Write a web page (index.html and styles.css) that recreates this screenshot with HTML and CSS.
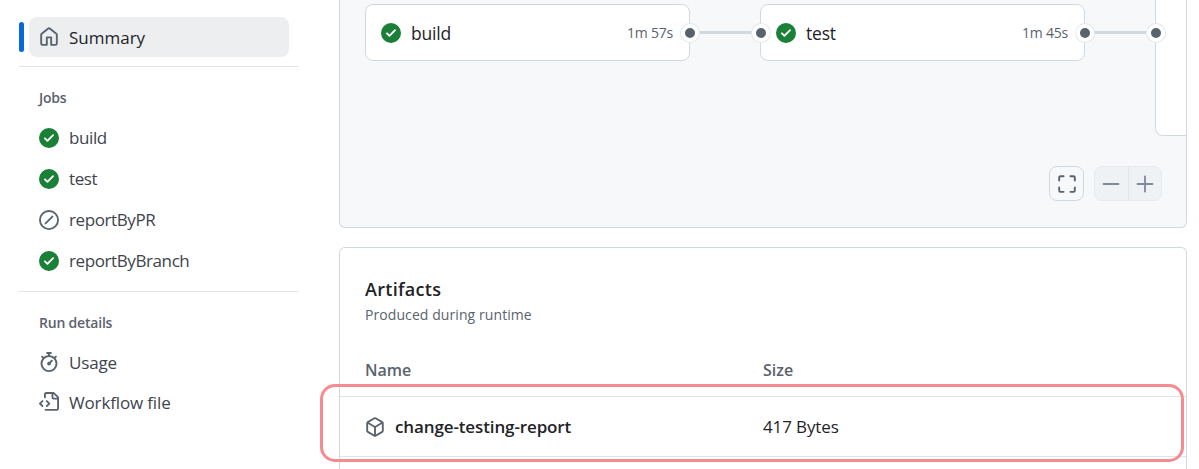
FILE: index.html
```html
<!DOCTYPE html>
<html lang="en">
<head>
<meta charset="utf-8">
<title>Summary</title>
<link rel="stylesheet" href="styles.css">
</head>
<body>
<svg class="sprite" width="0" height="0" aria-hidden="true">
  <symbol id="i-home" viewBox="0 0 16 16"><path d="M6.906.664a1.749 1.749 0 0 1 2.187 0l5.25 4.2c.415.332.657.835.657 1.367v7.019A1.75 1.75 0 0 1 13.25 15h-3.5a.75.75 0 0 1-.75-.75V9H7v5.25a.75.75 0 0 1-.75.75h-3.5A1.75 1.75 0 0 1 1 13.25V6.23c0-.531.242-1.034.657-1.366l5.25-4.2Zm1.25 1.171a.25.25 0 0 0-.312 0l-5.25 4.2a.25.25 0 0 0-.094.196v7.019c0 .138.112.25.25.25H5.5V8.25a.75.75 0 0 1 .75-.75h3.5a.75.75 0 0 1 .75.75v5.25h2.75a.25.25 0 0 0 .25-.25V6.23a.25.25 0 0 0-.094-.195Z"/></symbol>
  <symbol id="i-check" viewBox="0 0 16 16"><path d="M8 16A8 8 0 1 1 8 0a8 8 0 0 1 0 16Zm3.78-9.72a.751.751 0 0 0-.018-1.042.751.751 0 0 0-1.042-.018L6.75 9.19 5.28 7.72a.751.751 0 0 0-1.042.018.751.751 0 0 0-.018 1.042l2 2a.75.75 0 0 0 1.06 0Z"/></symbol>
  <symbol id="i-skip" viewBox="0 0 16 16"><path d="M8 0a8 8 0 1 1 0 16A8 8 0 0 1 8 0ZM1.5 8a6.5 6.5 0 1 0 13 0 6.5 6.5 0 0 0-13 0Zm9.78-2.22-5.5 5.5a.749.749 0 0 1-1.275-.326.749.749 0 0 1 .215-.734l5.5-5.5a.751.751 0 0 1 1.042.018.751.751 0 0 1 .018 1.042Z"/></symbol>
  <symbol id="i-stopwatch" viewBox="0 0 16 16"><path d="M5.75.75A.75.75 0 0 1 6.5 0h3a.75.75 0 0 1 0 1.5h-.75v1l-.001.041a6.724 6.724 0 0 1 3.464 1.435l.007-.006.75-.75a.751.751 0 0 1 1.042.018.751.751 0 0 1 .018 1.042l-.75.75-.006.007a6.75 6.75 0 1 1-10.548 0L2.72 5.03l-.75-.75a.751.751 0 0 1 .018-1.042.751.751 0 0 1 1.042-.018l.75.75.007.006A6.72 6.72 0 0 1 7.25 2.541V1.5H6.5a.75.75 0 0 1-.75-.75ZM8 14.5a5.25 5.25 0 1 0-.001-10.501A5.25 5.25 0 0 0 8 14.5Zm.389-6.7 1.33-1.33a.75.75 0 1 1 1.061 1.06L9.45 8.861A1.503 1.503 0 0 1 8 10.75a1.499 1.499 0 1 1 .389-2.95Z"/></symbol>
  <symbol id="i-file" viewBox="0 0 16 16"><path d="M4 1.75C4 .784 4.784 0 5.75 0h5.586c.464 0 .909.184 1.237.513l2.914 2.914c.329.328.513.773.513 1.237v8.586A1.75 1.75 0 0 1 14.25 15h-9a.75.75 0 0 1 0-1.5h9a.25.25 0 0 0 .25-.25V6h-2.75A1.75 1.75 0 0 1 10 4.25V1.5H5.75a.25.25 0 0 0-.25.25v2.5a.75.75 0 0 1-1.5 0Zm1.72 4.97a.75.75 0 0 1 1.06 0l2 2a.75.75 0 0 1 0 1.06l-2 2a.749.749 0 0 1-1.275-.326.749.749 0 0 1 .215-.734l1.47-1.47-1.47-1.47a.75.75 0 0 1 0-1.06ZM3.28 7.78 1.81 9.25l1.47 1.47a.751.751 0 0 1-.018 1.042.751.751 0 0 1-1.042.018l-2-2a.75.75 0 0 1 0-1.06l2-2a.751.751 0 0 1 1.042.018.751.751 0 0 1 .018 1.042Zm8.22-6.218V4.25c0 .138.112.25.25.25h2.688l-.011-.013-2.914-2.914-.013-.011Z"/></symbol>
  <symbol id="i-package" viewBox="0 0 16 16"><path d="m8.878.392 5.25 3.045c.54.314.872.89.872 1.514v6.098a1.75 1.75 0 0 1-.872 1.514l-5.25 3.045a1.75 1.75 0 0 1-1.756 0l-5.25-3.045A1.75 1.75 0 0 1 1 11.049V4.951c0-.624.332-1.201.872-1.514L7.122.392a1.75 1.75 0 0 1 1.756 0ZM7.875 1.69l-4.63 2.685L8 7.133l4.755-2.758-4.63-2.685a.248.248 0 0 0-.25 0ZM2.5 5.677v5.372c0 .09.047.171.125.216l4.625 2.683V8.432Zm6.25 8.271 4.625-2.683a.25.25 0 0 0 .125-.216V5.677L8.75 8.432Z"/></symbol>
  <symbol id="i-full" viewBox="0 0 16 16"><path d="M1.75 10a.75.75 0 0 1 .75.75v2.5c0 .138.112.25.25.25h2.5a.75.75 0 0 1 0 1.5h-2.5A1.75 1.75 0 0 1 1 13.25v-2.5a.75.75 0 0 1 .75-.75Zm12.5 0a.75.75 0 0 1 .75.75v2.5A1.75 1.75 0 0 1 13.25 15h-2.5a.75.75 0 0 1 0-1.5h2.5a.25.25 0 0 0 .25-.25v-2.5a.75.75 0 0 1 .75-.75ZM2.75 2.5a.25.25 0 0 0-.25.25v2.5a.75.75 0 0 1-1.5 0v-2.5C1 1.784 1.784 1 2.75 1h2.5a.75.75 0 0 1 0 1.5ZM10 1.75a.75.75 0 0 1 .75-.75h2.5c.966 0 1.75.784 1.75 1.75v2.5a.75.75 0 0 1-1.5 0v-2.5a.25.25 0 0 0-.25-.25h-2.5a.75.75 0 0 1-.75-.75Z"/></symbol>
</svg>
<div class="page">
  <aside class="sidebar">
    <div class="summary-row">
      <span class="indicator"></span>
      <a class="summary"><svg class="icon muted"><use href="#i-home"/></svg><span>Summary</span></a>
    </div>
    <hr class="rule rule-top">
    <h3 class="side-heading">Jobs</h3>
    <ul class="side-list jobs">
      <li><svg class="icon ok"><use href="#i-check"/></svg>build</li>
      <li><svg class="icon ok"><use href="#i-check"/></svg>test</li>
      <li><svg class="icon muted"><use href="#i-skip"/></svg>reportByPR</li>
      <li><svg class="icon ok"><use href="#i-check"/></svg>reportByBranch</li>
    </ul>
    <hr class="rule rule-mid">
    <h3 class="side-heading">Run details</h3>
    <ul class="side-list details">
      <li><svg class="icon muted"><use href="#i-stopwatch"/></svg>Usage</li>
      <li><svg class="icon muted"><use href="#i-file"/></svg>Workflow file</li>
    </ul>
  </aside>
  <main class="main">
    <section class="graph">
      <div class="nodes">
        <div class="node">
          <svg class="icon ok"><use href="#i-check"/></svg>
          <span class="node-name">build</span>
          <span class="node-time">1m 57s</span>
          <span class="port port-out"></span>
          <span class="wire"></span>
        </div>
        <div class="node">
          <svg class="icon ok"><use href="#i-check"/></svg>
          <span class="node-name">test</span>
          <span class="node-time">1m 45s</span>
          <span class="port port-in"></span>
          <span class="port port-out"></span>
          <span class="wire"></span>
        </div>
        <div class="node node-tall">
          <span class="port port-in"></span>
        </div>
      </div>
      <div class="controls">
        <button class="ctl ctl-full" aria-label="Fullscreen"><svg class="ctl-icon"><use href="#i-full"/></svg></button>
        <div class="zoom-group">
          <button class="ctl-zoom" aria-label="Zoom out"><svg class="ctl-icon" viewBox="0 0 16 16"><path class="ctl-stroke" d="M2 8h12" /></svg></button>
          <button class="ctl-zoom" aria-label="Zoom in"><svg class="ctl-icon" viewBox="0 0 16 16"><path class="ctl-stroke" d="M2 8h12M8 2v12" /></svg></button>
        </div>
      </div>
    </section>
    <section class="artifacts">
      <h2 class="art-title">Artifacts</h2>
      <p class="art-sub">Produced during runtime</p>
      <div class="art-row art-head"><span class="col-name">Name</span><span class="col-size">Size</span></div>
      <div class="art-row art-item">
        <span class="col-name art-name"><svg class="icon muted"><use href="#i-package"/></svg>change-testing-report</span>
        <span class="col-size">417 Bytes</span>
      </div>
    </section>
  </main>
</div>
<div class="annotation"></div>
</body>
</html>
```
FILE: styles.css
```css
* { box-sizing: border-box; }
html, body { margin: 0; height: 469px; overflow: hidden; background: #fff; }
body { font-family: "Open Sans", "Noto Sans", sans-serif; color: #1f2328; position: relative; }
.sprite { position: absolute; }
.page { display: flex; height: 469px; padding-left: 19px; }
.icon { width: 20px; height: 20px; fill: currentColor; flex: none; }
.muted { color: #59636e; }
.ok { color: #1a7f37; }

.sidebar { width: 280px; flex: none; padding-top: 17px; }
.summary-row { display: flex; align-items: center; height: 40px; gap: 5px; }
.indicator { width: 5px; height: 30px; border-radius: 3px; background: #0969da; }
.summary { width: 260px; height: 40px; background: #eceef0; border-radius: 8px; display: flex; align-items: center; gap: 10px; padding-left: 10px; font-size: 17px; font-weight: 500; color: #1f2328; }
.rule { border: 0; height: 1px; margin: 0; background: #dfe4e8; }
.rule-top { margin-top: 9px; }
.rule-mid { margin-top: 10px; background: #e2e4e6; }
.side-heading { margin: 21px 0 0 20px; font-size: 14px; line-height: 20px; font-weight: 600; color: #59636e; letter-spacing: -0.2px; }
.side-list { list-style: none; margin: 0; padding: 0 0 0 20px; }
.jobs { margin-top: 9px; }
.jobs li { height: 41px; display: flex; align-items: center; gap: 10px; font-size: 17px; letter-spacing: -0.4px; color: #3d444d; }
.details { margin-top: 9px; }
.details li { height: 40px; display: flex; align-items: center; gap: 10px; font-size: 17px; letter-spacing: -0.15px; color: #3d444d; }

.main { margin-left: 40px; width: 848px; flex: none; display: flex; flex-direction: column; gap: 19px; }
.graph { position: relative; height: 228px; background: #f6f8fa; border: 1px solid #d1d9e0; border-top: 0; border-radius: 0 0 6px 6px; overflow: hidden; padding: 4px 0 0 25px; }
.nodes { display: flex; gap: 70px; align-items: flex-start; }
.node { position: relative; flex: none; width: 325px; height: 57px; background: #fff; border: 1px solid #d1d9e0; border-radius: 8px; display: flex; align-items: center; padding: 0 16px 0 15px; }
.node-name { margin-left: 10px; font-size: 17.5px; font-weight: 500; letter-spacing: -0.2px; }
.node-time { margin-left: auto; font-size: 14px; letter-spacing: -0.2px; color: #59636e; }
.node-tall { height: 140px; margin-top: -8px; border-top: 0; border-radius: 0 0 0 8px; }
.port { position: absolute; top: 19px; width: 18px; height: 18px; border-radius: 50%; background: #59636e; border: 4px solid #fff; box-shadow: 0 0 0 1px #e3e8ec; z-index: 2; }
.port-in { left: -9px; }
.port-out { right: -10px; }
.node-tall .port { top: 28px; }
.wire { position: absolute; left: 100%; top: 26px; width: 70px; height: 3px; background: #d1d9e0; }

.controls { position: absolute; left: 709px; top: 166px; display: flex; gap: 10px; }
.ctl { width: 35px; height: 35px; padding: 0; background: #f6f8fa; border: 1px solid #d1d9e0; border-radius: 8px; display: flex; align-items: center; justify-content: center; }
.ctl-icon { width: 20px; height: 20px; fill: #59636e; stroke: none; }
.ctl-stroke { stroke: #818b98; stroke-width: 1.5; stroke-linecap: round; }
.zoom-group { display: flex; width: 68px; height: 35px; border: 1px solid #e6eaef; border-radius: 8px; background: #eff2f5; }
.ctl-zoom { flex: 1; padding: 0; border: 0; background: transparent; display: flex; align-items: center; justify-content: center; }
.ctl-zoom + .ctl-zoom { border-left: 1px solid #e1e5ea; }

.artifacts { flex: 1; border: 1px solid #d1d9e0; border-bottom: 0; border-radius: 6px 6px 0 0; padding-top: 28px; }
.art-title { margin: 0 0 0 25px; font-size: 18px; line-height: 26px; font-weight: 600; letter-spacing: 0.3px; }
.art-sub { margin: 3px 0 0 25px; font-size: 14px; line-height: 20px; letter-spacing: 0.08px; color: #59636e; }
.art-row { display: flex; align-items: center; padding-left: 25px; }
.art-head { height: 53px; margin-top: 18px; font-size: 16px; font-weight: 600; color: #59636e; }
.art-item { height: 61px; border-top: 1px solid #dfe4e8; border-bottom: 1px solid #dfe4e8; font-size: 17px; letter-spacing: -0.12px; }
.col-name { width: 398px; flex: none; display: flex; align-items: center; gap: 10px; }
.art-name { font-weight: 600; }

.annotation { position: absolute; left: 320px; top: 384px; width: 864px; height: 78px; border: 3px solid #f58b91; border-radius: 15px; pointer-events: none; }
```
